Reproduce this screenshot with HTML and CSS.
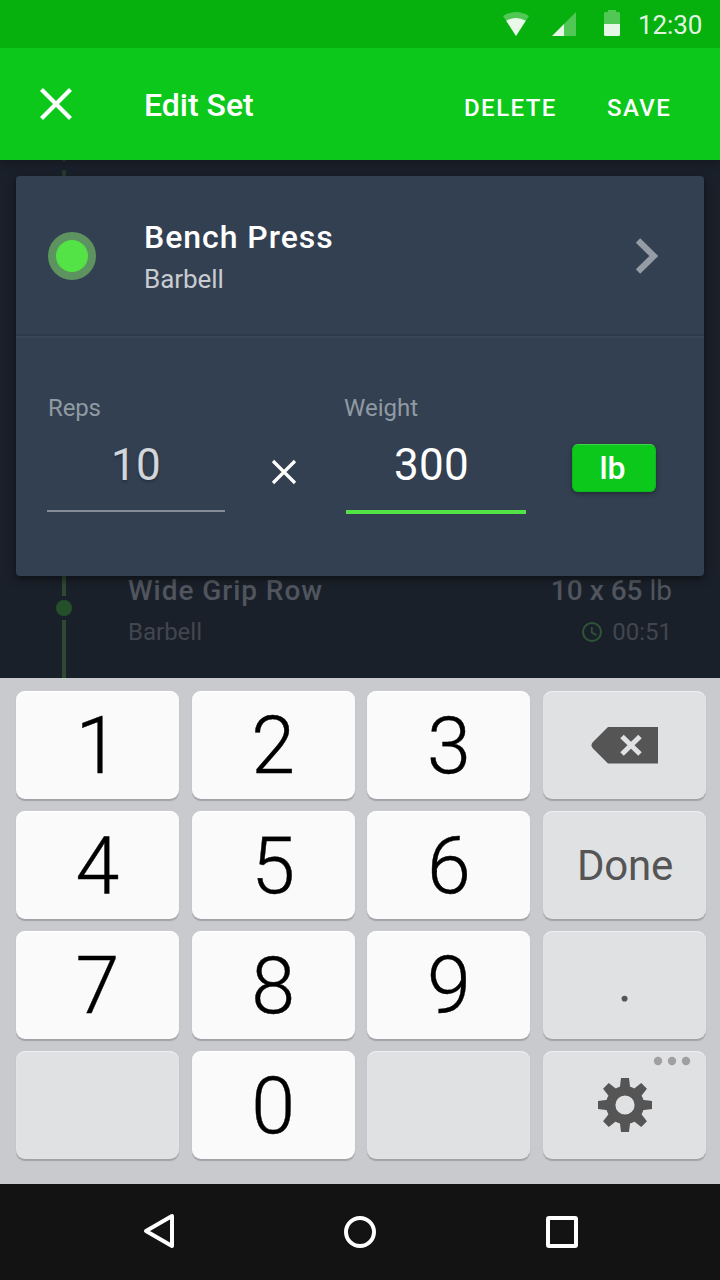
FILE: index.html
```
<!DOCTYPE html>
<html lang="en">
<head>
<meta charset="utf-8">
<title>Edit Set</title>
<link rel="stylesheet" href="styles.css">
</head>
<body>
<div class="screen">
  <div class="statusbar">
    <svg class="wifi" width="26" height="24" viewBox="0 0 26 24"><path d="M0 4Q13-4 26 4L13 24Z" fill="#fff" fill-opacity=".3"/><path d="M3.200 8.700Q13 3.300 22.800 8.700L13 24Z" fill="#fff" fill-opacity=".87"/></svg>
    <svg class="signal" width="24" height="24" viewBox="0 0 24 24"><path d="M24 0V24H12V12Z" fill="#fff" fill-opacity=".3"/><path d="M12 12V24H0Z" fill="#fff" fill-opacity=".9"/></svg>
    <svg class="battery" width="16" height="26" viewBox="0 0 16 26"><path d="M0 14V3.500Q0 2 1.500 2H4V0H12V2H14.500Q16 2 16 3.500V14Z" fill="#fff" fill-opacity=".3"/><path d="M0 14H16V24.500Q16 26 14.500 26H1.500Q0 26 0 24.500Z" fill="#fff" fill-opacity=".9"/></svg>
    <span class="clock">12:30</span>
  </div>
  <header class="appbar">
    <svg class="close" width="32" height="32" viewBox="0 0 32 32"><path d="M1.500 1.500L30.500 30.500M30.500 1.500L1.500 30.500" stroke="#fff" stroke-width="4.200"/></svg>
    <h1 class="title">Edit Set</h1>
    <span class="action delete">DELETE</span>
    <span class="action save">SAVE</span>
  </header>
  <main class="content">
    <svg class="track-top" width="4" height="16" viewBox="0 0 4 16"><path d="M0 0H4Q3.500 1.700 2 1.700T0 0ZM0 16V10H4V16Z" fill="#28392d"/></svg>
    <section class="card">
      <div class="exercise">
        <span class="bullet"></span>
        <div class="exercise-text">
          <div class="exercise-name">Bench Press</div>
          <div class="exercise-kind">Barbell</div>
        </div>
        <svg class="chevron" width="24" height="36" viewBox="0 0 24 36"><path d="M3 2.500L18.800 18L3 33.500" fill="none" stroke="#959ca5" stroke-width="6.200"/></svg>
      </div>
      <div class="fields">
        <div class="field reps">
          <div class="label">Reps</div>
          <div class="value">10</div>
        </div>
        <svg class="times" width="24" height="24" viewBox="0 0 24 24"><path d="M1 1L23 23M23 1L1 23" stroke="#fff" stroke-width="3.200"/></svg>
        <div class="field weight">
          <div class="label">Weight</div>
          <div class="value">300</div>
        </div>
        <button class="unit">lb</button>
      </div>
    </section>
    <section class="row">
      <svg class="track" width="16" height="102" viewBox="0 0 16 102"><path d="M6 0H10V20H6ZM6 102V44H10V102Z" fill="#2d4933"/><circle cx="8" cy="32" r="8" fill="#254f2b"/></svg>
      <div class="row-left">
        <div class="row-name">Wide Grip Row</div>
        <div class="row-sub">Barbell</div>
      </div>
      <div class="row-right">
        <div class="row-load"><b>10 x 65</b> lb</div>
        <div class="row-time"><svg width="20" height="20" viewBox="0 0 20 20" fill="none" stroke="#2f5537"><circle cx="10" cy="10" r="9" stroke-width="2"/><path d="M9.800 5V10.500L14.500 13.200" stroke-width="1.700"/></svg><span>00:51</span></div>
      </div>
    </section>
  </main>
  <div class="keyboard">
    <div class="key">1</div><div class="key">2</div><div class="key">3</div>
    <div class="key alt"><svg width="68" height="38" viewBox="0 0 68 38"><path d="M17 1H67V37.500H17L2 22.500Q-1 19.200 2 16Z" fill="#555"/><path d="M31 10.500L49 28M49 10.500L31 28" stroke="#e0e1e3" stroke-width="5"/></svg></div>
    <div class="key">4</div><div class="key">5</div><div class="key">6</div>
    <div class="key alt done">Done</div>
    <div class="key">7</div><div class="key">8</div><div class="key">9</div>
    <div class="key alt dot">.</div>
    <div class="key alt"></div><div class="key">0</div><div class="key alt"></div>
    <div class="key alt settings">
      <svg class="more" width="38" height="10" viewBox="0 0 38 10" fill="#a0a0a0"><circle cx="5" cy="5" r="4.200"/><circle cx="19" cy="5" r="4.200"/><circle cx="33" cy="5" r="4.200"/></svg>
      <svg class="gear" width="56" height="56" viewBox="-28 -28 56 56" fill="#555"><circle r="14.300" fill="none" stroke="#555" stroke-width="9.400"/><g id="teeth"><path d="M-5.200-17L-4-27H4L5.200-17ZM-5.200 17L-4 27H4L5.200 17ZM-17-5.200L-27-4V4L-17 5.200ZM17-5.200L27-4V4L17 5.200Z"/></g><use href="#teeth" transform="rotate(45)"/></svg>
    </div>
  </div>
  <nav class="navbar">
    <svg width="720" height="96" viewBox="0 0 720 96" fill="none" stroke="#fff" stroke-width="4" stroke-linejoin="round"><path d="M172 32V62L146 47Z"/><circle cx="360" cy="48" r="14"/><rect x="548" y="34" width="28" height="28" rx="1"/></svg>
  </nav>
</div>
</body>
</html>
```
FILE: styles.css
```
* { box-sizing: border-box; }
body { margin: 0; font-family: Roboto, sans-serif; color: #fff; background: #1a202a; }
.screen { width: 720px; height: 1280px; display: flex; flex-direction: column; overflow: hidden; }

.statusbar { height: 48px; flex: none; background: #06b00d; display: flex; align-items: flex-start; padding: 0 17px 0 503px; position: relative; z-index: 1; }
.wifi { margin-top: 12px; }
.signal { margin: 12px 0 0 23px; }
.battery { margin: 10px 0 0 28px; }
.clock { margin-left: 18px; line-height: 50px; font-size: 26px; letter-spacing: -.1px; color: rgba(255,255,255,.9); white-space: nowrap; }

.appbar { height: 112px; flex: none; background: #0cc81b; display: flex; align-items: flex-start; padding: 40px 0 0 40px; position: relative; box-shadow: 0 2px 8px rgba(0,0,0,.3); }
.title { margin: 0 0 0 72px; width: 320px; font-size: 32px; line-height: 34px; font-weight: 500; letter-spacing: 0; }
.action { font-size: 24px; line-height: 40px; font-weight: 500; letter-spacing: 1.45px; white-space: nowrap; }
.delete { width: 143px; }

.content { height: 518px; flex: none; display: flex; flex-direction: column; background: #1a202a; }
.track-top { flex: none; margin-left: 62px; }
.card { height: 400px; flex: none; margin: 0 16px; border-radius: 4px; background: #334051; box-shadow: 0 3px 8px rgba(0,0,0,.5); position: relative; }
.exercise { height: 160px; display: flex; align-items: flex-start; padding: 40px 44px 0 32px; border-bottom: 2px solid #2e394a; }
.bullet { width: 48px; height: 48px; margin-top: 16px; border-radius: 50%; background: #54e346; border: 8px solid #5c935e; }
.exercise-text { width: 476px; margin-left: 48px; flex: none; }
.exercise-name { font-size: 32px; line-height: 42px; font-weight: 500; letter-spacing: .95px; }
.exercise-kind { font-size: 26px; line-height: 42px; letter-spacing: -.05px; color: #c8ccd1; }
.chevron { margin-top: 22px; margin-left: 15px; flex: none; }
.fields { height: 240px; border-top: 2px solid #384557; display: flex; align-items: flex-start; padding: 56px 0 0 31px; }
.field .label { padding-left: 1px; font-size: 24px; line-height: 28px; color: #909aa3; }
.field .value { height: 90px; font-size: 44px; line-height: 86px; text-align: center; letter-spacing: .3px; }
.reps { width: 178px; }
.reps .label { letter-spacing: -.15px; }
.reps .value { color: #d3d6da; text-shadow: 0 2px 3px rgba(0,0,0,.25); border-bottom: 2px solid #858c97; }
.times { margin: 66px 0 0 47px; flex: none; overflow: visible; }
.weight { width: 182px; margin-left: 48px; }
.weight .label { padding-left: 0; }
.weight .value { height: 92px; margin-left: 2px; padding-right: 9px; border-bottom: 4px solid #54e346; }
.unit { width: 84px; height: 48px; margin: 50px 0 0 46px; padding: 0 3px 0 0; border: 1px solid #10b420; border-top-color: #42d24c; border-radius: 6px; background: #0cc81b; box-shadow: 0 2px 5px rgba(0,0,0,.35); color: #fff; font: 500 32px/46px Roboto, sans-serif; }

.row { height: 102px; display: flex; padding: 0 48px 0 56px; }
.row-left { margin-left: 56px; flex: 1; }
.row-name, .row-load { font-size: 28px; line-height: 30px; color: #50555e; }
.row-name { font-weight: 500; letter-spacing: .95px; }
.row-load b { font-weight: 500; }
.row-sub, .row-time { font-size: 24px; line-height: 52px; color: #41464f; }
.row-right { text-align: right; }
.row-time { display: flex; justify-content: flex-end; align-items: center; gap: 10px; }

.keyboard { height: 506px; flex: none; padding: 13px 14px 0 16px; background: #c9cace; display: grid; grid-template-columns: repeat(4, 163px); grid-auto-rows: 108px; row-gap: 12px; justify-content: space-between; align-content: start; }
.key { display: flex; align-items: center; justify-content: center; border-radius: 9px; background: #fafafa; box-shadow: 0 1.5px 1px #a1a2a5, inset 0 1px 0 #fff; color: #000; font: 300 79px/108px Roboto, sans-serif; padding-top: 1px; -webkit-text-stroke: .4px #000; }
.alt { padding: 0 0 0 1px; background: #e0e1e3; box-shadow: 0 1.5px 1px #a1a2a5, inset 0 1px 1px #f0f0f1; color: #555; position: relative; -webkit-text-stroke: 0; }
.done { font-size: 42px; font-weight: 400; letter-spacing: -.2px; padding-top: 2px; }
.dot { font-size: 54px; font-weight: 400; padding-bottom: 4px; }
.more { position: absolute; right: 15px; top: 5px; }

.navbar { height: 96px; flex: none; background: #131313; }
.navbar svg { display: block; }
```
